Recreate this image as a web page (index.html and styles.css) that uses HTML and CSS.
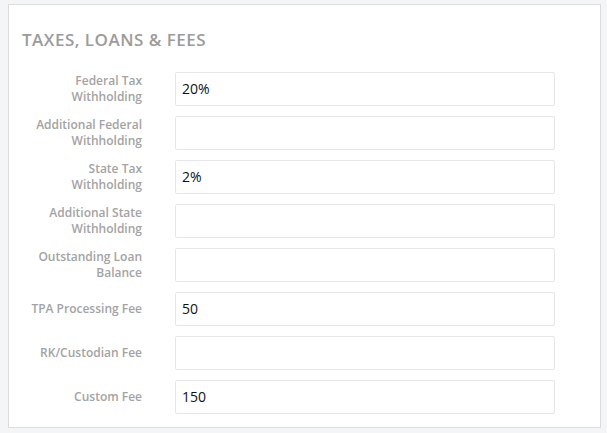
FILE: index.html
```html
<!DOCTYPE html>
<html>
<head>
<meta charset="utf-8">
<link rel="stylesheet" href="styles.css">
</head>
<body>
<section class="card">
  <h2 class="title">TAXES, LOANS &amp; FEES</h2>
  <div class="form">
    <label class="label">Federal Tax Withholding</label>
    <div class="input">20%</div>
    <label class="label">Additional Federal Withholding</label>
    <div class="input"></div>
    <label class="label">State Tax Withholding</label>
    <div class="input">2%</div>
    <label class="label">Additional State Withholding</label>
    <div class="input"></div>
    <label class="label">Outstanding Loan Balance</label>
    <div class="input"></div>
    <label class="label">TPA Processing Fee</label>
    <div class="input">50</div>
    <label class="label">RK/Custodian Fee</label>
    <div class="input"></div>
    <label class="label">Custom Fee</label>
    <div class="input">150</div>
  </div>
</section>
</body>
</html>
```

FILE: styles.css
```css
html, body {
  margin: 0;
  padding: 0;
  background: #f4f5f7;
  font-family: "Open Sans", "Liberation Sans", sans-serif;
}
body {
  padding: 4px 0 0 8px;
}
.card {
  box-sizing: border-box;
  width: 593px;
  height: 424px;
  background: #fff;
  border: 1px solid #dcdcdc;
  padding: 24px 0 0 13px;
}
.title {
  margin: 0;
  font-size: 17px;
  line-height: 22px;
  font-weight: 600;
  letter-spacing: 0.5px;
  color: #9b9b9b;
}
.form {
  margin-top: 21px;
  display: grid;
  grid-template-columns: 120px 380px;
  column-gap: 33px;
  row-gap: 10px;
}
.label {
  align-self: center;
  text-align: right;
  font-size: 12px;
  line-height: 16px;
  font-weight: 600;
  color: #a3a3a3;
}
.input {
  box-sizing: border-box;
  height: 34px;
  border: 1px solid #e6e6e6;
  border-radius: 2px;
  padding: 0 6px;
  font-size: 14px;
  line-height: 32px;
  color: #111;
}
```
